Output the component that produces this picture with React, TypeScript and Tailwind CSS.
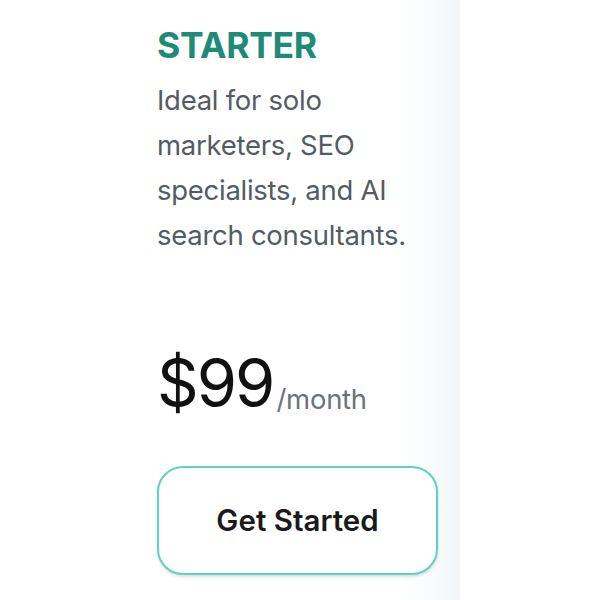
export default function App() {
  return (
    <div className="flex h-[600px] w-[600px] bg-white" style={{ fontFamily: "Inter, 'Noto Sans', sans-serif" }}>
      {/* pricing card */}
      <div className="flex h-full w-[460px] flex-col bg-[linear-gradient(to_right,#ffffff_400px,#f3f7f9_460px)] pl-[157px] pt-[26px]">
        <h2 className="text-[35.5px] font-bold leading-[40px] tracking-[-0.01em] text-[#1e8a78]">STARTER</h2>
        <p className="mt-[12px] w-[265px] text-[27.5px] leading-[45px] tracking-[-0.01em] text-[#555b63]">
          Ideal for solo marketers, SEO specialists, and AI search consultants.
        </p>
        <div className="mt-[90px] flex items-baseline">
          <span className="text-[65px] leading-[70px] tracking-[-0.03em] text-[#111]">$99</span>
          <span className="ml-[3px] translate-y-[3px] text-[27.5px] tracking-[-0.01em] text-[#6b7280]">/month</span>
        </div>
        <button className="mt-[48px] flex h-[109px] w-[281px] items-center justify-center rounded-[26px] border-2 border-[#5fd3c1] bg-white text-[29.5px] font-semibold text-[#1a1a1a] shadow-[0_2px_3px_rgba(0,0,0,0.12)]">
          Get Started
        </button>
      </div>
      <div className="flex-1 bg-white" />
    </div>
  );
}
